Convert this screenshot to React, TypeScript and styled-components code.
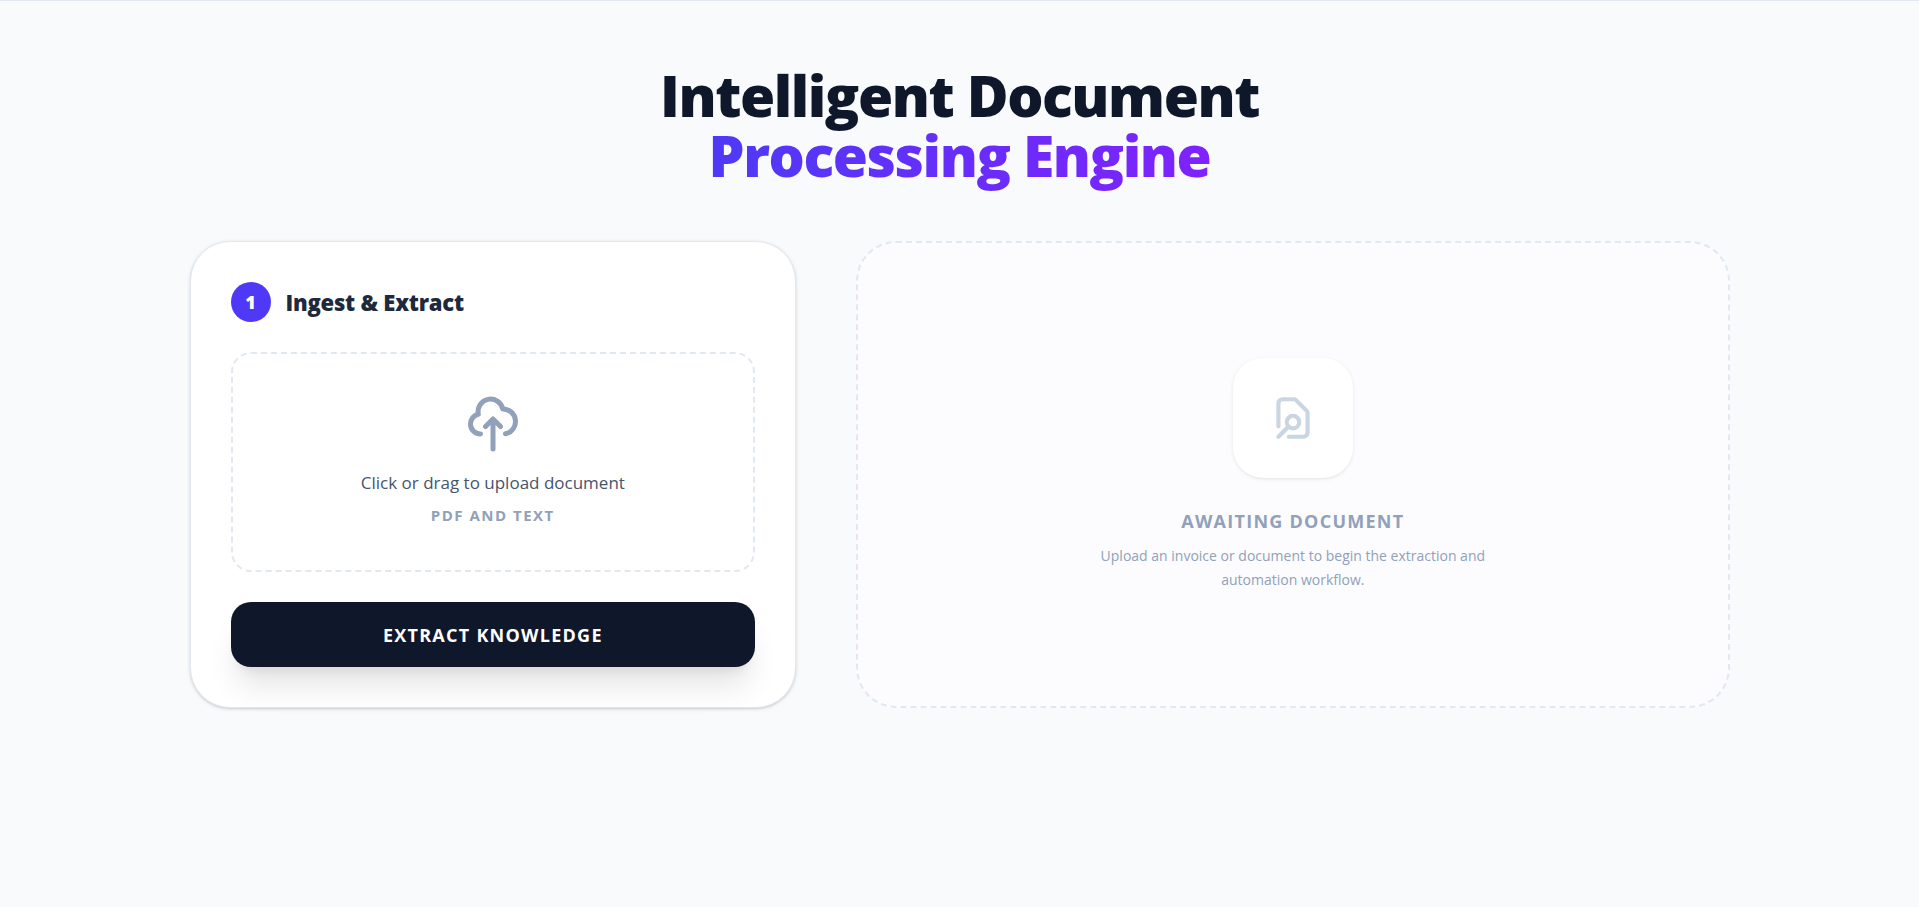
import React from "react";
import styled, { createGlobalStyle } from "styled-components";

const GlobalStyle = createGlobalStyle`
  *, *::before, *::after { box-sizing: border-box; }
  body {
    margin: 0;
    background: #f8fafc;
    color: #0f172a;
    font-family: "Segoe UI", "Open Sans", "Noto Sans", sans-serif;
  }
  h1, h2, h3, p { margin: 0; }
`;

const Page = styled.div`
  min-height: 100vh;
  border-top: 1px solid #e2e8f0;
`;

const Main = styled.main`
  max-width: 1600px;
  margin: 0 auto;
  padding: 64px 30px;
`;

const Heading = styled.h1`
  margin-bottom: 56px;
  font-size: 57px;
  line-height: 60px;
  font-weight: 900;
  letter-spacing: -0.025em;
  text-align: center;
`;

const Accent = styled.span`
  background: linear-gradient(to right, #4f39f6, #7f22fe);
  background-clip: text;
  -webkit-background-clip: text;
  color: transparent;
`;

const Columns = styled.div`
  display: grid;
  grid-template-columns: repeat(12, minmax(0, 1fr));
  column-gap: 60px;
`;

const Card = styled.section`
  grid-column: span 5;
  display: flex;
  flex-direction: column;
  gap: 30px;
  padding: 40px;
  background: #fff;
  border: 1px solid #e2e8f0;
  border-radius: 40px;
  box-shadow: 0 1px 4px rgba(0, 0, 0, 0.1), 0 1px 2px rgba(0, 0, 0, 0.1);
`;

const CardHeader = styled.header`
  display: flex;
  align-items: center;
  gap: 15px;
`;

const Step = styled.span`
  display: grid;
  place-items: center;
  width: 40px;
  height: 40px;
  border-radius: 50%;
  background: #4f39f6;
  color: #fff;
  font-size: 18px;
  font-weight: 800;
`;

const CardTitle = styled.h2`
  font-size: 22px;
  line-height: 32px;
  font-weight: 800;
  letter-spacing: -0.01em;
  color: #1d293d;
`;

const DropZone = styled.label`
  position: relative;
  display: flex;
  flex-direction: column;
  align-items: center;
  min-height: 220px;
  padding: 40px;
  border: 2px dashed #e2e8f0;
  border-radius: 20px;
  text-align: center;
  cursor: pointer;
`;

const FileInput = styled.input`
  position: absolute;
  width: 1px;
  height: 1px;
  opacity: 0;
`;

const Icon = styled.svg<{ $size: number }>`
  width: ${(p) => p.$size}px;
  height: ${(p) => p.$size}px;
  fill: none;
  stroke: currentColor;
  stroke-width: 2;
  stroke-linecap: round;
  stroke-linejoin: round;
`;

const UploadIcon = styled(Icon)`
  margin-bottom: 15px;
  color: #90a1b9;
`;

const DropText = styled.span`
  font-size: 17px;
  line-height: 28px;
  font-weight: 500;
  color: #45556c;
`;

const DropHint = styled.span`
  margin-top: 8px;
  font-size: 15px;
  line-height: 20px;
  font-weight: 700;
  letter-spacing: 0.1em;
  text-transform: uppercase;
  color: #90a1b9;
`;

const SubmitButton = styled.button`
  height: 65px;
  border: 0;
  border-radius: 20px;
  background: #0f172b;
  color: #fff;
  font: inherit;
  font-size: 18px;
  font-weight: 700;
  letter-spacing: 0.07em;
  text-transform: uppercase;
  cursor: pointer;
  box-shadow: 0 25px 31px -6px rgba(0, 0, 0, 0.1), 0 10px 12px -8px rgba(0, 0, 0, 0.1);
`;

const EmptyPanel = styled.section`
  grid-column: span 7;
  display: flex;
  flex-direction: column;
  align-items: center;
  justify-content: center;
  padding: 40px;
  border: 2px dashed #e2e8f0;
  border-radius: 40px;
  background: #fcfcfe;
  text-align: center;
  color: #90a1b9;
`;

const IconTile = styled.div`
  display: grid;
  place-items: center;
  width: 120px;
  height: 120px;
  margin-bottom: 30px;
  border-radius: 30px;
  background: #fff;
  color: #cad5e2;
  box-shadow: 0 1px 4px rgba(0, 0, 0, 0.08), 0 1px 2px -1px rgba(0, 0, 0, 0.1);
`;

const EmptyTitle = styled.h3`
  margin-bottom: 10px;
  font-size: 18px;
  line-height: 26px;
  font-weight: 700;
  letter-spacing: 0.07em;
  text-transform: uppercase;
`;

const EmptyText = styled.p`
  max-width: 400px;
  font-size: 14px;
  line-height: 24px;
`;

export default function App() {
  return (
    <Page>
      <GlobalStyle />
      <Main>
        <Heading>
          Intelligent Document
          <br />
          <Accent>Processing Engine</Accent>
        </Heading>
        <Columns>
          <Card>
            <CardHeader>
              <Step>1</Step>
              <CardTitle>Ingest &amp; Extract</CardTitle>
            </CardHeader>
            <DropZone htmlFor="document">
              <FileInput id="document" type="file" accept=".pdf,.txt" />
              <UploadIcon $size={60} viewBox="0 0 24 24" aria-hidden="true">
                <path d="M7 16a4 4 0 01-.88-7.903A5 5 0 1115.9 6L16 6a5 5 0 011 9.9M15 13l-3-3m0 0l-3 3m3-3v12" />
              </UploadIcon>
              <DropText>Click or drag to upload document</DropText>
              <DropHint>PDF and Text</DropHint>
            </DropZone>
            <SubmitButton type="button">Extract Knowledge</SubmitButton>
          </Card>
          <EmptyPanel>
            <IconTile>
              <Icon $size={50} viewBox="0 0 24 24" aria-hidden="true">
                <path d="M10 21h7a2 2 0 002-2V9.414a1 1 0 00-.293-.707l-5.414-5.414A1 1 0 0012.586 3H7a2 2 0 00-2 2v11m0 5l4.879-4.879m0 0a3 3 0 104.243-4.242 3 3 0 00-4.243 4.242z" />
              </Icon>
            </IconTile>
            <EmptyTitle>Awaiting Document</EmptyTitle>
            <EmptyText>
              Upload an invoice or document to begin the extraction and automation workflow.
            </EmptyText>
          </EmptyPanel>
        </Columns>
      </Main>
    </Page>
  );
}
